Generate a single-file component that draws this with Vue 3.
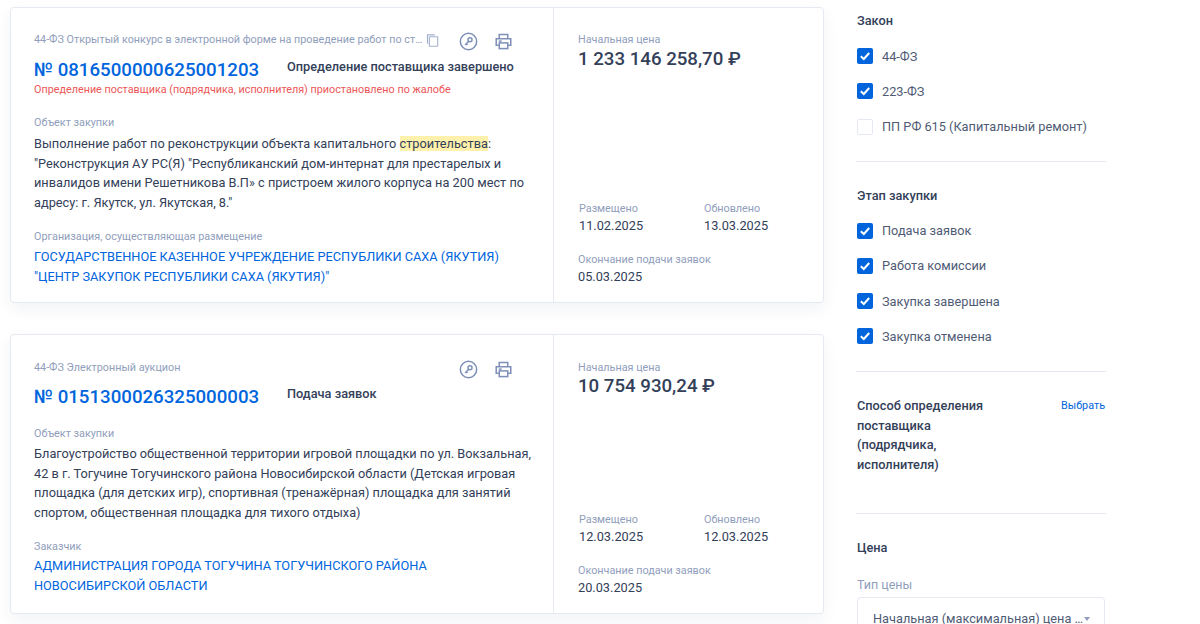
<template>
  <div class="page">
    <main class="results">
      <article v-for="card in cards" :key="card.number" class="card" :class="card.mod">
        <section class="main">
          <div class="top">
            <div class="type-row">
              <span class="type">{{ card.type }}</span>
              <svg v-if="card.copy" class="copy" viewBox="0 0 14 14" width="13" height="13" fill="none" stroke="#a5b1cb" stroke-width="1.2">
                <path d="M9.5 1H1.6v9.5" />
                <rect x="3.6" y="3" width="9" height="10.2" rx="0.6" />
              </svg>
            </div>
            <div class="icons">
              <svg viewBox="0 0 20 20" width="19" height="19" fill="none" stroke="#7f90b8" stroke-width="1.6">
                <circle cx="10" cy="10" r="8.6" />
                <circle cx="11.6" cy="8.2" r="2.1" />
                <path d="M10 10 6.4 13.6M7.6 12.4l1.3 1.3" />
              </svg>
              <svg viewBox="0 0 18 18" width="17" height="17" fill="none" stroke="#7f90b8" stroke-width="1.6">
                <path d="M4.5 5.5V1.5h9v4" />
                <path d="M4 13H1.3V6h15.4v7H14" />
                <rect x="4.5" y="10.5" width="9" height="6" />
                <path d="M4 8.6h3" />
              </svg>
            </div>
          </div>
          <div class="head">
            <a class="number">№ {{ card.number }}</a>
            <span class="status">{{ card.status }}</span>
          </div>
          <p v-if="card.alert" class="alert">{{ card.alert }}</p>
          <div class="label object">Объект закупки</div>
          <p class="text">
            {{ card.before }}<mark v-if="card.mark">{{ card.mark }}</mark>{{ card.after }}
          </p>
          <div class="label org">{{ card.orgLabel }}</div>
          <a class="org-link">{{ card.org }}</a>
        </section>
        <aside class="side">
          <div>
            <div class="label start">Начальная цена</div>
            <div class="price">{{ card.price }}</div>
          </div>
          <div>
            <div class="dates">
              <div>
                <div class="label">Размещено</div>
                <div class="date">{{ card.posted }}</div>
              </div>
              <div>
                <div class="label">Обновлено</div>
                <div class="date">{{ card.updated }}</div>
              </div>
            </div>
            <div class="label">Окончание подачи заявок</div>
            <div class="date">{{ card.end }}</div>
          </div>
        </aside>
      </article>
    </main>

    <aside class="filters">
      <div v-for="group in groups" :key="group.title" class="group">
        <h4>{{ group.title }}</h4>
        <label v-for="item in group.items" :key="item.name" class="check">
          <span class="box" :class="{ on: item.on }">
            <svg v-if="item.on" viewBox="0 0 16 16" width="16" height="16" fill="none" stroke="#fff" stroke-width="2">
              <path d="M3.8 8.2 6.8 11l5.4-6" />
            </svg>
          </span>
          {{ item.name }}
        </label>
      </div>
      <div class="group method">
        <h4>Способ определения поставщика (подрядчика, исполнителя)</h4>
        <a>Выбрать</a>
      </div>
      <div class="group price-filter">
        <h4>Цена</h4>
        <div class="label">Тип цены</div>
        <div class="select">
          <span>Начальная (максимальная) цена контракта</span>
          <i></i>
        </div>
      </div>
    </aside>
  </div>
</template>

<script setup>
const cards = [
  {
    mod: 'first',
    type: '44-ФЗ Открытый конкурс в электронной форме на проведение работ по строительству',
    copy: true,
    number: '0816500000625001203',
    status: 'Определение поставщика завершено',
    alert: 'Определение поставщика (подрядчика, исполнителя) приостановлено по жалобе',
    before: 'Выполнение работ по реконструкции объекта капитального ',
    mark: 'строительства',
    after: ': "Реконструкция АУ РС(Я) "Республиканский дом-интернат для престарелых и инвалидов имени Решетникова В.П» с пристроем жилого корпуса на 200 мест по адресу: г. Якутск, ул. Якутская, 8."',
    orgLabel: 'Организация, осуществляющая размещение',
    org: 'ГОСУДАРСТВЕННОЕ КАЗЕННОЕ УЧРЕЖДЕНИЕ РЕСПУБЛИКИ САХА (ЯКУТИЯ) "ЦЕНТР ЗАКУПОК РЕСПУБЛИКИ САХА (ЯКУТИЯ)"',
    price: '1 233 146 258,70 ₽',
    posted: '11.02.2025',
    updated: '13.03.2025',
    end: '05.03.2025'
  },
  {
    mod: 'second',
    type: '44-ФЗ Электронный аукцион',
    number: '0151300026325000003',
    status: 'Подача заявок',
    before: 'Благоустройство общественной территории игровой площадки по ул. Вокзальная, 42 в г. Тогучине Тогучинского района Новосибирской области (Детская игровая площадка (для детских игр), спортивная (тренажёрная) площадка для занятий спортом, общественная площадка для тихого отдыха)',
    orgLabel: 'Заказчик',
    org: 'АДМИНИСТРАЦИЯ ГОРОДА ТОГУЧИНА ТОГУЧИНСКОГО РАЙОНА НОВОСИБИРСКОЙ ОБЛАСТИ',
    price: '10 754 930,24 ₽',
    posted: '12.03.2025',
    updated: '12.03.2025',
    end: '20.03.2025'
  }
]

const groups = [
  {
    title: 'Закон',
    items: [
      { name: '44-ФЗ', on: true },
      { name: '223-ФЗ', on: true },
      { name: 'ПП РФ 615 (Капитальный ремонт)', on: false }
    ]
  },
  {
    title: 'Этап закупки',
    items: [
      { name: 'Подача заявок', on: true },
      { name: 'Работа комиссии', on: true },
      { name: 'Закупка завершена', on: true },
      { name: 'Закупка отменена', on: true }
    ]
  }
]
</script>

<style>
html,
body {
  margin: 0;
  height: 624px;
  overflow: hidden;
  background: #fff;
}
</style>

<style scoped>
.page {
  display: flex;
  align-items: flex-start;
  height: 624px;
  overflow: hidden;
  padding: 7px 0 0 10px;
  box-sizing: border-box;
  font-family: Roboto, "Liberation Sans", sans-serif;
  color: #334059;
}

.results {
  width: 814px;
  flex: none;
  display: flex;
  flex-direction: column;
  gap: 31px;
}

.card {
  display: flex;
  background: #fff;
  border: 1px solid #e4e9f2;
  border-radius: 4px;
  box-shadow: 0 6px 16px rgba(30, 50, 110, 0.06);
  box-sizing: border-box;
}

.card.first {
  height: 296px;
}

.card.second {
  height: 280px;
}

.main {
  width: 543px;
  flex: none;
  box-sizing: border-box;
  padding: 24px 20px 0 23px;
  border-right: 1px solid #e4e9f2;
}

.first .main {
  padding-top: 23px;
}

.top {
  display: flex;
  align-items: center;
  height: 16px;
}

.type-row {
  display: flex;
  align-items: center;
  width: 406px;
}

.type {
  display: block;
  width: 390px;
  font-size: 10.8px;
  line-height: 18px;
  height: 18px;
  margin-top: 2px;
  color: #909ebb;
  white-space: nowrap;
  overflow: hidden;
  text-overflow: ellipsis;
}

.copy {
  margin-left: 2px;
  margin-top: 2px;
  flex: none;
}

.icons {
  display: flex;
  align-items: center;
  gap: 17px;
  margin-left: 19px;
  margin-top: 4px;
}

.head {
  display: flex;
  align-items: flex-start;
  margin-top: 8px;
  height: 28px;
}

.first .head {
  margin-top: 9px;
  height: 26px;
}

.number {
  width: 253px;
  flex: none;
  font-size: 18.67px;
  font-weight: 500;
  line-height: 28px;
  color: #0065dd;
}

.status {
  font-size: 12.75px;
  font-weight: 500;
  line-height: 22px;
  color: #334059;
  white-space: nowrap;
}

.alert {
  margin: 0;
  font-size: 10.8px;
  line-height: 16px;
  color: #eb5757;
}

.label {
  font-size: 10.8px;
  line-height: 16px;
  color: #909ebb;
}

.label.object,
.label.org,
.label.start {
  line-height: 18px;
}

.label.object {
  margin-top: 14px;
}

.first .label.object {
  margin-top: 16px;
}

.text {
  margin: 1px 0 0;
  font-size: 12.75px;
  line-height: 19.6px;
  color: #334059;
}

.first .text {
  margin-top: 2px;
}

mark {
  background: #fff1ab;
  color: inherit;
}

.label.org {
  margin-top: 16px;
}

.org-link {
  display: block;
  margin-top: 0;
  font-size: 12.75px;
  line-height: 19.6px;
  color: #0065dd;
}

.first .org-link {
  margin-top: 1px;
}

.side {
  flex: 1;
  display: flex;
  flex-direction: column;
  justify-content: space-between;
  padding: 24px 24px 17px;
}

.first .side {
  padding-top: 23px;
}

.price {
  font-size: 18.67px;
  font-weight: 500;
  line-height: 20px;
  color: #334059;
}

.second .price {
  margin-top: -1px;
}

.dates {
  display: grid;
  grid-template-columns: 125px 1fr;
  margin-left: 1px;
  margin-bottom: 18px;
}

.date {
  font-size: 12.75px;
  line-height: 17px;
  color: #334059;
}

.filters {
  width: 250px;
  flex: none;
  margin: -7px 0 0 32px;
}

.group {
  border-bottom: 1px solid #e4e9f2;
  padding: 11px 0 17px 1px;
}

.group + .group {
  padding-top: 24px;
}

h4 {
  margin: 0;
  font-size: 12.75px;
  font-weight: 500;
  line-height: 19.6px;
  color: #334059;
}

.check {
  display: flex;
  align-items: center;
  gap: 9px;
  height: 35.25px;
  font-size: 12.75px;
  color: #4f5b75;
}

.group h4 + .check {
  margin-top: 8px;
}

.group + .group h4 + .check {
  margin-top: 7px;
}

.box {
  width: 16px;
  height: 16px;
  box-sizing: border-box;
  border: 1px solid #e4e9f2;
  border-radius: 2px;
  background: #fff;
  flex: none;
  display: block;
}

.box.on {
  border: 0;
  background: #0065dd;
}

.method {
  display: flex;
  justify-content: space-between;
  padding-bottom: 39px;
}

.method h4 {
  width: 150px;
}

.method a {
  font-size: 10.8px;
  line-height: 19.6px;
  color: #0065dd;
  margin-right: 1px;
}

.price-filter {
  border: 0;
}

.price-filter .label {
  font-size: 12.5px;
  margin-top: 19px;
}

.select {
  margin-top: 4px;
  height: 44px;
  width: 248px;
  box-sizing: border-box;
  border: 1px solid #e4e9f2;
  border-radius: 4px;
  padding: 0 14px 0 15px;
  display: flex;
  align-items: center;
  font-size: 12.75px;
  color: #4f5b75;
}

.select span {
  flex: 1;
  white-space: nowrap;
  overflow: hidden;
  text-overflow: ellipsis;
}

.select i {
  width: 0;
  height: 0;
  border-left: 3.5px solid transparent;
  border-right: 3.5px solid transparent;
  border-top: 4px solid #909ebb;
}
</style>
